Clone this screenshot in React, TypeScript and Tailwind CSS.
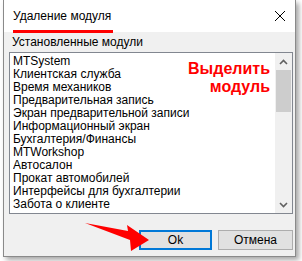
import React from 'react';

const modules = [
  'MTSystem',
  'Клиентская служба',
  'Время механиков',
  'Предварительная запись',
  'Экран предварительной записи',
  'Информационный экран',
  'Бухгалтерия/Финансы',
  'MTWorkshop',
  'Автосалон',
  'Прокат автомобилей',
  'Интерфейсы для бухгалтерии',
  'Забота о клиенте',
];

const App: React.FC = () => {
  return (
    <div className="relative w-[302px] h-[261px] bg-white overflow-hidden font-['Liberation_Sans',Arial,sans-serif] text-[12px] text-black">
      {/* Dialog window */}
      <div className="ml-[3px] w-[293px] h-[257px] flex flex-col border-x border-b border-[#8a8a8a] bg-[#f0f0f0] shadow-[3px_3px_5px_rgba(0,0,0,0.35)]">
        {/* Title bar */}
        <div className="h-[32px] shrink-0 bg-white flex items-center justify-between pl-[9px] pr-[7px]">
          <span className="relative leading-[16px] text-[12px]">
            Удаление модуля
            <span className="absolute left-0 right-[-2px] top-[22px] h-[3px] bg-[#ff0000]" />
          </span>
          <svg width="12" height="12" viewBox="0 0 12 12" className="mr-[2px]">
            <path d="M1 1 L11 11 M11 1 L1 11" stroke="#000" strokeWidth="1" />
          </svg>
        </div>

        {/* Body */}
        <div className="flex-1 flex flex-col pl-[5px] pr-[2px]">
          <div className="h-[20px] pt-[3px] pl-[3px] leading-[15px]">Установленные модули</div>

          {/* List box */}
          <div className="relative h-[162px] w-[284px] bg-white border border-[#828790] flex">
            <div className="flex-1 pt-[2px] pl-[3px]">
              {modules.map((m) => (
                <div key={m} className="h-[13px] leading-[13px] whitespace-nowrap overflow-hidden">
                  {m}
                </div>
              ))}
            </div>
            {/* Scrollbar */}
            <div className="w-[17px] bg-[#f0f0f0] flex flex-col items-center">
              <div className="h-[17px] flex items-center justify-center">
                <svg width="9" height="6" viewBox="0 0 9 6">
                  <path d="M1 5 L4.5 1.5 L8 5" stroke="#606060" strokeWidth="1.6" fill="none" />
                </svg>
              </div>
              <div className="w-[15px] h-[42px] bg-[#cdcdcd]" />
              <div className="flex-1" />
              <div className="h-[17px] flex items-center justify-center">
                <svg width="9" height="6" viewBox="0 0 9 6">
                  <path d="M1 1 L4.5 4.5 L8 1" stroke="#606060" strokeWidth="1.6" fill="none" />
                </svg>
              </div>
            </div>
            {/* Annotation */}
            <div className="absolute right-[22px] top-[7px] text-right text-[#ff0000] font-bold text-[16px] leading-[18px]">
              Выделить
              <br />
              модуль
            </div>
          </div>

          {/* Buttons */}
          <div className="mt-[16px] flex justify-end gap-[6px] w-[284px]">
            <button className="w-[73px] h-[20px] bg-[#e1e1e1] border-2 border-[#0078d7] leading-[16px] text-[12px]">
              Ok
            </button>
            <button className="w-[75px] h-[20px] bg-[#e1e1e1] border border-[#adadad] leading-[18px] text-[12px]">
              Отмена
            </button>
          </div>
        </div>
      </div>

      {/* Red arrow overlay */}
      <svg className="absolute left-0 top-0 pointer-events-none" width="302" height="261" viewBox="0 0 302 261">
        <polygon points="85,223 128,231 127,225 149,240 131,251 130,240" fill="#ff0000" />
      </svg>
    </div>
  );
};

export default App;
